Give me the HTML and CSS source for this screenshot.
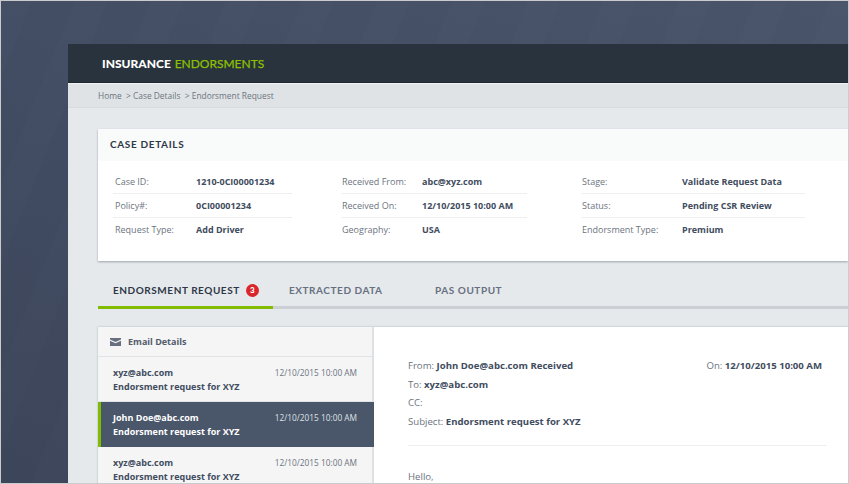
FILE: index.html
```html
<!DOCTYPE html>
<html lang="en">
<head>
    <meta charset="UTF-8">
    <meta name="viewport" content="width=device-width, initial-scale=1.0">
    <title>Insurance Endorsments</title>
    <link rel="stylesheet" href="styles.css">
</head>
<body>
    <div class="app">
        <header class="topbar">
            <h1>INSURANCE <span>ENDORSMENTS</span></h1>
        </header>
        <nav class="breadcrumb">Home &nbsp;&gt; Case Details &nbsp;&gt; Endorsment Request</nav>

        <main class="content">
            <!-- Case details -->
            <section class="card">
                <h2>CASE DETAILS</h2>
                <div class="details">
                    <dl class="col col-1">
                        <div class="row"><dt>Case ID:</dt><dd>1210-0CI00001234</dd></div>
                        <div class="row"><dt>Policy#:</dt><dd>0CI00001234</dd></div>
                        <div class="row"><dt>Request Type:</dt><dd>Add Driver</dd></div>
                    </dl>
                    <dl class="col col-2">
                        <div class="row"><dt>Received From:</dt><dd>abc@xyz.com</dd></div>
                        <div class="row"><dt>Received On:</dt><dd>12/10/2015 10:00 AM</dd></div>
                        <div class="row"><dt>Geography:</dt><dd>USA</dd></div>
                    </dl>
                    <dl class="col col-3">
                        <div class="row"><dt>Stage:</dt><dd>Validate Request Data</dd></div>
                        <div class="row"><dt>Status:</dt><dd>Pending CSR Review</dd></div>
                        <div class="row"><dt>Endorsment Type:</dt><dd>Premium</dd></div>
                    </dl>
                </div>
            </section>

            <!-- Tabs -->
            <div class="tabs">
                <a class="tab active">ENDORSMENT REQUEST <span class="badge">3</span></a>
                <a class="tab tab-data">EXTRACTED DATA</a>
                <a class="tab tab-pas">PAS OUTPUT</a>
            </div>

            <!-- Email -->
            <section class="email">
                <aside class="email-list">
                    <div class="email-head">
                        <svg width="11" height="8" viewBox="0 0 11 8"><path d="M0 0h11v1.4L5.5 3.9 0 1.4z M0 2.7l5.5 2.5L11 2.7V8H0z" fill="#67707f"/></svg>
                        Email Details
                    </div>
                    <div class="email-item">
                        <div class="line"><b>xyz@abc.com</b><time>12/10/2015 10:00 AM</time></div>
                        <b>Endorsment request for XYZ</b>
                    </div>
                    <div class="email-item selected">
                        <div class="line"><b>John Doe@abc.com</b><time>12/10/2015 10:00 AM</time></div>
                        <b>Endorsment request for XYZ</b>
                    </div>
                    <div class="email-item">
                        <div class="line"><b>xyz@abc.com</b><time>12/10/2015 10:00 AM</time></div>
                        <b>Endorsment request for XYZ</b>
                    </div>
                </aside>
                <article class="email-body">
                    <div class="meta">
                        <p class="from"><span>From: <b>John Doe@abc.com Received</b></span><span>On: <b>12/10/2015 10:00 AM</b></span></p>
                        <p>To: <b>xyz@abc.com</b></p>
                        <p>CC:</p>
                        <p>Subject: <b>Endorsment request for XYZ</b></p>
                    </div>
                    <p class="hello">Hello,</p>
                </article>
            </section>
        </main>
    </div>
</body>
</html>
```

FILE: styles.css
```css
body {
    margin: 0;
    height: 484px;
    overflow: hidden;
    box-sizing: border-box;
    padding: 44px 0 0 68px;
    border: 1px solid #c9cbcd;
    font-family: "Open Sans", Arial, sans-serif;
    font-size: 10px;
    color: #414c5e;
    background-color: #454f66;
    background-image:
        repeating-linear-gradient(112deg, rgba(255,255,255,0.008) 0 30px, rgba(0,0,0,0.008) 30px 70px),
        linear-gradient(200deg, #4a546b 0%, #444e65 35%, #3c465a 100%);
}
.app {
    margin: -1px 0 0 -1px;
    height: 439px;
    background: #e6e9ec;
    overflow: hidden;
}
.topbar {
    height: 38px;
    background: #29333d;
    border-bottom: 1px solid #20282f;
    box-shadow: 0 1px 0 #f0f2f3;
    display: flex;
    align-items: center;
    padding-left: 34px;
}
.topbar h1 {
    margin: 0;
    font-family: Lato, Arial, sans-serif;
    font-size: 12px;
    font-weight: 900;
    color: #fff;
}
.topbar span {
    font-weight: 400;
    color: #8dc000;
    margin-left: 1px;
    -webkit-text-stroke: 0.25px #8dc000;
}
.breadcrumb {
    margin-top: 1px;
    height: 23px;
    line-height: 24px;
    padding-left: 30px;
    background: #dfe3e6;
    border-bottom: 1px solid #d8dcdf;
    font-size: 8.4px;
    color: #6c7480;
}
.content {
    padding: 21px 0 0 30px;
}
.card {
    background: #fff;
    height: 132px;
    box-shadow: 0 1px 2px rgba(70, 80, 95, 0.45);
}
.card h2 {
    margin: 0;
    height: 32px;
    line-height: 31px;
    padding-left: 12px;
    background: #f9fafa;
    font-family: Lato, Arial, sans-serif;
    font-size: 10px;
    font-weight: 700;
    letter-spacing: 0.65px;
    color: #2e3846;
}
.details {
    display: flex;
    padding: 9px 0 0 15px;
}
.col {
    margin: 0;
}
.col-1 { width: 179px; margin-right: 50px; }
.col-2 { width: 185px; margin-right: 55px; }
.col-3 { width: 223px; }
.row {
    display: flex;
    height: 24.2px;
    line-height: 24px;
    border-bottom: 1px solid #eceef0;
    box-sizing: border-box;
    font-size: 9px;
}
.row:last-child {
    border-bottom: none;
}
.row dt {
    width: 80px;
    color: #6c7480;
}
.col-1 .row dt { width: 83px; padding-left: 2px; box-sizing: border-box; }
.col-3 .row dt { width: 100px; }
.row dd {
    margin: 0;
    font-weight: 700;
    color: #414c5e;
}
.tabs {
    display: flex;
    height: 28px;
    box-sizing: border-box;
    margin-top: 20px;
    border-bottom: 3px solid #ccd0d5;
    font-family: Lato, Arial, sans-serif;
}
.tab {
    height: 28px;
    box-sizing: border-box;
    font-size: 10px;
    font-weight: 700;
    letter-spacing: 0.55px;
    color: #667080;
    display: flex;
    align-items: center;
    padding-bottom: 7px;
    border-bottom: 3px solid transparent;
}
.tab.active {
    width: 175px;
    padding-left: 15px;
    color: #2e3846;
    border-bottom-color: #82bc00;
}
.tab-data { padding-left: 16px; width: 162px; }
.badge {
    width: 13px;
    height: 13px;
    margin-left: 6px;
    border-radius: 50%;
    background: #d8262c;
    color: #fff;
    font-size: 8px;
    font-weight: 900;
    line-height: 13px;
    text-align: center;
    letter-spacing: 0;
}
.email {
    display: flex;
    margin-top: 18px;
    height: 160px;
    background: #fff;
    box-shadow: 0 0 2px rgba(70, 80, 95, 0.35);
}
.email-list {
    width: 274px;
    flex: none;
    background: #f5f5f6;
    border-right: 2px solid #dfe2e5;
}
.email-head {
    height: 29px;
    display: flex;
    align-items: center;
    padding-left: 12px;
    gap: 7px;
    font-size: 9px;
    font-weight: 700;
    color: #525c6b;
    border-bottom: 1px solid #e1e4e6;
}
.email-item {
    height: 45px;
    box-sizing: border-box;
    padding: 9px 15px 0 15px;
    font-size: 9px;
    line-height: 14px;
    color: #414c5e;
    border-bottom: 1px solid #e1e4e6;
}
.email-item b {
    font-weight: 700;
}
.line {
    display: flex;
    justify-content: space-between;
}
.line time {
    font-size: 8.3px;
    color: #6c7480;
}
.email-item.selected {
    padding: 9px 17px 0 12px;
    margin-right: -2px;
    background: #4a5669;
    border-left: 3px solid #82bc00;
    border-bottom: none;
    color: #fff;
}
.selected .line time {
    color: #dde1e6;
}
.email-body {
    flex: 1;
    padding: 30px 21px 0 34px;
    font-size: 9.6px;
    color: #6c7480;
}
.email-body b {
    font-weight: 700;
    color: #414c5e;
}
.meta {
    border-bottom: 1px solid #eceef0;
    padding-bottom: 14px;
}
.meta p {
    margin: 0;
    height: 18.5px;
    line-height: 18.5px;
}
.meta .from {
    display: flex;
    justify-content: space-between;
    padding-right: 5px;
}
.hello {
    margin: 24px 0 0;
}
```
